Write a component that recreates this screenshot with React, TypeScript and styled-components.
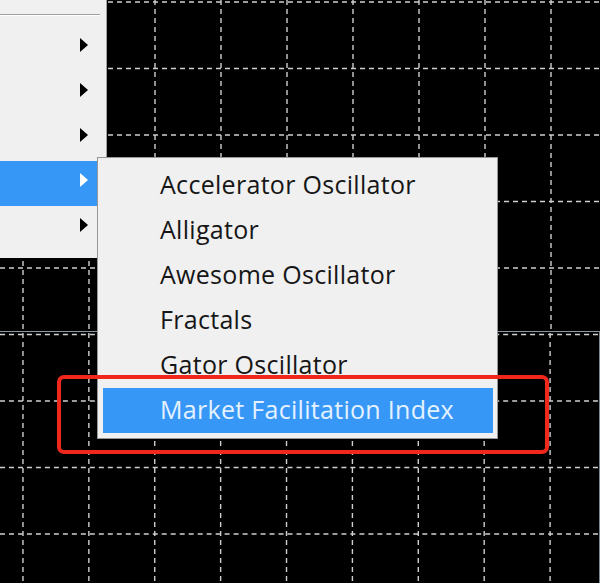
import React from "react";
import styled, { createGlobalStyle } from "styled-components";

const GlobalStyle = createGlobalStyle`
  html, body { margin: 0; padding: 0; background: #000; }
  body { font-family: "Open Sans", "Noto Sans", sans-serif; }
`;

const W = 600;
const H = 583;
const DIVIDER_Y = 331;
const V_LINES = Array.from({ length: 9 }, (_, i) => 23 + 66 * i);
const H_LINES = Array.from({ length: 9 }, (_, i) => 2 + 66.5 * i);

const Screen = styled.div`
  position: relative;
  width: ${W}px;
  height: ${H}px;
  overflow: hidden;
  background: #000;
`;

const Chart = styled.div`
  display: flex;
  flex-direction: column;
  width: 100%;
  height: 100%;
`;

const Pane = styled.div<{ $h?: number; $sub?: boolean }>`
  flex: ${(p) => (p.$h ? `0 0 ${p.$h}px` : "1 1 auto")};
  border-top: ${(p) => (p.$sub ? "1px solid #8d97a2" : "none")};
  border-right: ${(p) => (p.$sub ? "1px solid #7d8790" : "none")};
  overflow: hidden;
  svg { display: block; width: 100%; height: 100%; }
`;

function Grid({ y0, h }: { y0: number; h: number }) {
  return (
    <svg viewBox={`0 ${y0} ${W} ${h}`} preserveAspectRatio="none">
      {V_LINES.map((x) => (
        <line key={"v" + x} x1={x} y1={0} x2={x} y2={H} stroke="#cfcfcf" strokeWidth={1.4} strokeDasharray="5 4" />
      ))}
      {H_LINES.map((y) => (
        <line key={"h" + y} x1={0} y1={y} x2={W} y2={y} stroke="#cfcfcf" strokeWidth={1.4} strokeDasharray="5 4" />
      ))}
    </svg>
  );
}

const ParentMenu = styled.div`
  position: absolute;
  left: 0;
  top: 0;
  width: 106px;
  height: 258px;
  background: #f0f0f0;
  border-right: 1px solid #a3a3a3;
  display: flex;
  flex-direction: column;
`;

const MenuStub = styled.div`
  height: 14px;
`;

const Separator = styled.div`
  width: 100px;
  height: 1px;
  background: #a0a0a0;
  border-bottom: 1px solid #ffffff;
  margin-bottom: 10px;
`;

const ParentRow = styled.div<{ $active?: boolean }>`
  height: 45px;
  box-sizing: border-box;
  padding: 0 18px 8px 0;
  display: flex;
  align-items: center;
  justify-content: flex-end;
  background: ${(p) => (p.$active ? "#3797f7" : "transparent")};
`;

const Arrow = styled.span<{ $active?: boolean }>`
  width: 0;
  height: 0;
  border-top: 7px solid transparent;
  border-bottom: 7px solid transparent;
  border-left: 8px solid ${(p) => (p.$active ? "#ffffff" : "#000000")};
`;

const SubMenu = styled.div`
  position: absolute;
  left: 97px;
  top: 157px;
  width: 401px;
  box-sizing: border-box;
  background: #f0f0f0;
  border: 1px solid #979797;
  padding: 5px 4px 5px 5px;
  display: flex;
  flex-direction: column;
`;

const SubItem = styled.div<{ $active?: boolean }>`
  height: 45px;
  box-sizing: border-box;
  padding: 0 0 4px 57px;
  display: flex;
  align-items: center;
  font-size: 25px;
  font-weight: 500;
  letter-spacing: 0.3px;
  color: ${(p) => (p.$active ? "#e4f2ff" : "#161616")};
  background: ${(p) => (p.$active ? "#3797f7" : "transparent")};
  white-space: nowrap;
`;

const Callout = styled.div`
  position: absolute;
  left: 57px;
  top: 375px;
  width: 492px;
  height: 79px;
  box-sizing: border-box;
  border: 4px solid #f0271c;
  border-radius: 7px;
  pointer-events: none;
`;

const items = [
  "Accelerator Oscillator",
  "Alligator",
  "Awesome Oscillator",
  "Fractals",
  "Gator Oscillator",
  "Market Facilitation Index",
];

export default function App() {
  return (
    <>
      <GlobalStyle />
      <Screen>
        <Chart>
          <Pane $h={DIVIDER_Y}>
            <Grid y0={0} h={DIVIDER_Y} />
          </Pane>
          <Pane $sub>
            <Grid y0={DIVIDER_Y + 1} h={H - DIVIDER_Y - 1} />
          </Pane>
        </Chart>
        <ParentMenu>
          <MenuStub />
          <Separator />
          {[0, 1, 2, 3, 4].map((i) => (
            <ParentRow key={i} $active={i === 3}>
              <Arrow $active={i === 3} />
            </ParentRow>
          ))}
        </ParentMenu>
        <SubMenu>
          {items.map((t, i) => (
            <SubItem key={t} $active={i === items.length - 1}>
              {t}
            </SubItem>
          ))}
        </SubMenu>
        <Callout />
      </Screen>
    </>
  );
}
